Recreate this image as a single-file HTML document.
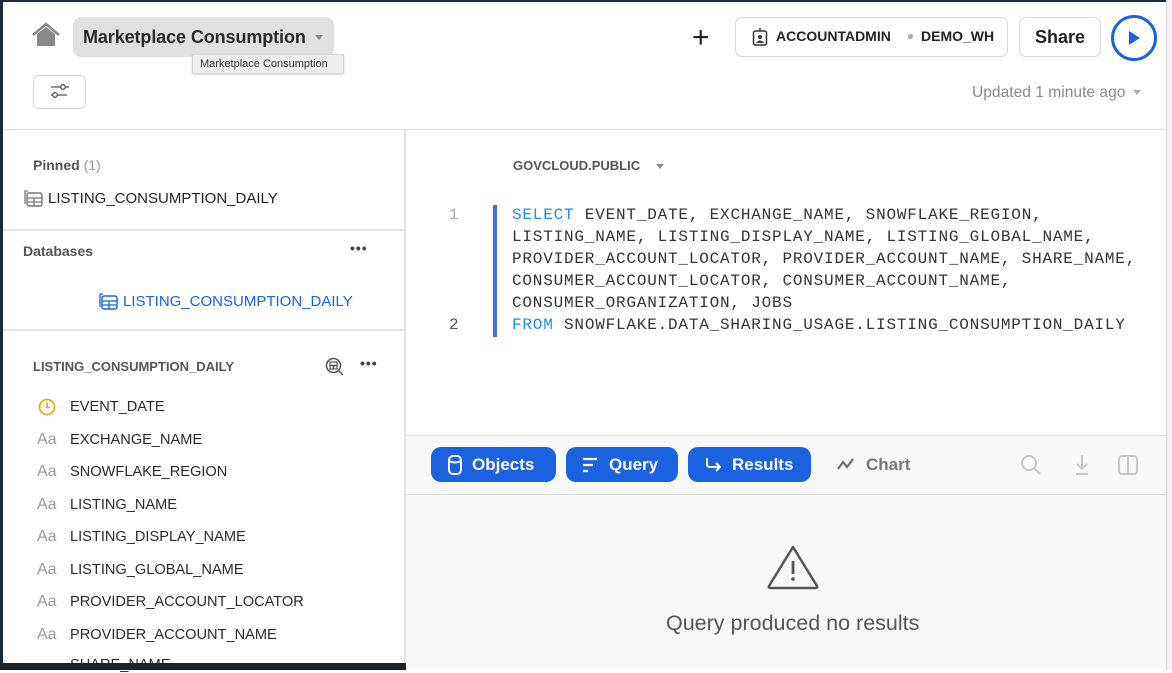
<!DOCTYPE html>
<html><head><style>
*{box-sizing:border-box;margin:0;padding:0}
body{width:1172px;height:670px;overflow:hidden;background:#fff;font-family:"Liberation Sans",sans-serif;position:relative;color:#1e1e1e}
.a{position:absolute}
.t{font-size:15px;color:#222}
.col{position:absolute;left:70px;font-size:14.6px;color:#2a2a2a}
.aa{position:absolute;left:37px;font-size:16px;color:#999}
.btn{position:absolute;top:447px;height:35px;background:#1a62e0;border-radius:10px;color:#fff;font-size:17px;font-weight:bold;display:flex;align-items:center}
.code{font-family:"Liberation Mono",monospace;font-size:16px;letter-spacing:0.8px;color:#333;line-height:22px}
.kw{color:#1a8ee8}
</style></head><body>
<div class="a" style="left:0;top:0;width:1172px;height:2px;background:#1c2a3e"></div>
<div class="a" style="left:0;top:0;width:3px;height:670px;background:#1c2a3e"></div>
<svg class="a" style="left:31px;top:22px" width="30" height="26" viewBox="0 0 30 26"><path d="M2 13 L15 2 L28 13" fill="none" stroke="#888" stroke-width="2.5"/><path d="M6 12 L15 5 L24 12 V24 H6Z" fill="#888"/></svg>
<div class="a" style="left:73px;top:17px;width:261px;height:40px;background:#dfe0e2;border-radius:8px"></div>
<div class="a" style="left:83px;top:27px;font-size:18px;font-weight:bold;color:#2a2a2a;letter-spacing:-0.1px">Marketplace Consumption</div>
<div class="a" style="left:315px;top:35px;width:0;height:0;border-left:4px solid transparent;border-right:4px solid transparent;border-top:5px solid #888"></div>
<div class="a" style="left:192px;top:54px;width:152px;height:20px;background:#eceef0;border:1px solid #d4d6d9;font-size:11px;color:#333;padding:3px 0 0 7px;box-shadow:0 1px 2px rgba(0,0,0,.15)">Marketplace Consumption</div>
<div class="a" style="left:33px;top:75px;width:53px;height:34px;border:1px solid #d6d6d6;border-radius:6px"></div>
<svg class="a" style="left:50px;top:82px" width="20" height="18" viewBox="0 0 20 18"><path d="M1 5H11M15 5H19" stroke="#555" stroke-width="1.3"/><circle cx="13" cy="5" r="2.3" fill="none" stroke="#555" stroke-width="1.3"/><path d="M1 13H3M7 13H17" stroke="#555" stroke-width="1.3"/><circle cx="5" cy="13" r="2.3" fill="none" stroke="#555" stroke-width="1.3"/></svg>
<div class="a" style="left:692px;top:24px;font-size:30px;color:#222;line-height:28px">+</div>
<div class="a" style="left:735px;top:17px;width:273px;height:40px;border:1px solid #d8d8d8;border-radius:7px"></div>
<svg class="a" style="left:752px;top:27px" width="16" height="20" viewBox="0 0 16 20"><rect x="1.5" y="4" width="13" height="14" rx="2" fill="none" stroke="#333" stroke-width="1.5"/><path d="M8 1V4" stroke="#333" stroke-width="1.5"/><circle cx="8" cy="10" r="2" fill="#333"/><path d="M4 16Q8 11 12 16" fill="#333"/></svg>
<div class="a" style="left:776px;top:28px;font-size:14px;font-weight:bold;color:#222">ACCOUNTADMIN</div>
<div class="a" style="left:908px;top:34px;width:5px;height:5px;border-radius:50%;background:#aaa"></div>
<div class="a" style="left:921px;top:28px;font-size:14px;font-weight:bold;color:#222">DEMO_WH</div>
<div class="a" style="left:1019px;top:17px;width:82px;height:40px;border:1px solid #d8d8d8;border-radius:7px;font-size:18px;font-weight:bold;color:#222;text-align:center;line-height:38px">Share</div>
<div class="a" style="left:1111px;top:15px;width:46px;height:46px;border:3px solid #1a62e0;border-radius:50%"></div>
<div class="a" style="left:1129px;top:31px;width:0;height:0;border-top:7px solid transparent;border-bottom:7px solid transparent;border-left:11px solid #1a62e0"></div>
<div class="a" style="left:972px;top:84px;font-size:15.6px;color:#8a8a8a">Updated 1 minute ago</div>
<div class="a" style="left:1133px;top:90px;width:0;height:0;border-left:4px solid transparent;border-right:4px solid transparent;border-top:5px solid #aaa"></div>
<div class="a" style="left:3px;top:129px;width:1169px;height:1px;background:#ddd"></div>
<div class="a" style="left:404px;top:130px;width:2px;height:540px;background:#e2e2e2"></div>
<div class="a" style="left:33px;top:157px;font-size:14px;font-weight:bold;color:#555">Pinned <span style="font-weight:normal;color:#999">(1)</span></div>
<svg class="a" style="left:23px;top:188px" width="21" height="20" viewBox="0 0 21 20"><path d="M2 16V3H5" fill="none" stroke="#777" stroke-width="1.3"/><rect x="4" y="5" width="15" height="13" rx="2" fill="none" stroke="#777" stroke-width="1.4"/><path d="M4 10H19M11 10V18M4 14H19" stroke="#777" stroke-width="1.3"/></svg>
<div class="a t" style="left:48px;top:190px">LISTING_CONSUMPTION_DAILY</div>
<div class="a" style="left:3px;top:229px;width:401px;height:2px;background:#e2e2e2"></div>
<div class="a" style="left:23px;top:243px;font-size:14px;font-weight:bold;color:#555">Databases</div>
<div class="a" style="left:350px;top:240px;font-size:14px;font-weight:bold;color:#444;letter-spacing:1px">•••</div>
<svg class="a" style="left:98px;top:291px" width="21" height="20" viewBox="0 0 21 20"><path d="M2 16V3H5" fill="none" stroke="#1a62e0" stroke-width="1.3"/><rect x="4" y="5" width="15" height="13" rx="2" fill="none" stroke="#1a62e0" stroke-width="1.4"/><path d="M4 10H19M11 10V18M4 14H19" stroke="#1a62e0" stroke-width="1.3"/></svg>
<div class="a t" style="left:123px;top:293px;color:#1a62e0">LISTING_CONSUMPTION_DAILY</div>
<div class="a" style="left:3px;top:329px;width:401px;height:2px;background:#e2e2e2"></div>
<div class="a" style="left:33px;top:359px;font-size:13px;font-weight:bold;color:#555">LISTING_CONSUMPTION_DAILY</div>
<svg class="a" style="left:325px;top:357px" width="20" height="20" viewBox="0 0 20 20"><circle cx="8.5" cy="8.5" r="7" fill="none" stroke="#555" stroke-width="1.5"/><rect x="5" y="5" width="7" height="7" fill="none" stroke="#555" stroke-width="1.2"/><path d="M5 8.5H12M8.5 8.5V12M13.5 13.5L18 18" stroke="#555" stroke-width="1.5"/></svg>
<div class="a" style="left:360px;top:355px;font-size:14px;font-weight:bold;color:#444;letter-spacing:1px">•••</div>
<svg class="a" style="left:38px;top:398px" width="18" height="18" viewBox="0 0 18 18"><circle cx="9" cy="9" r="7.5" fill="none" stroke="#e0a800" stroke-width="1.6"/><path d="M9 4.5V9.5H12" fill="none" stroke="#e0a800" stroke-width="1.6"/></svg>
<div class="col" style="top:399px">EVENT_DATE</div>
<div class="aa" style="top:431px">Aa</div><div class="col" style="top:432px">EXCHANGE_NAME</div>
<div class="aa" style="top:463px">Aa</div><div class="col" style="top:464px">SNOWFLAKE_REGION</div>
<div class="aa" style="top:496px">Aa</div><div class="col" style="top:497px">LISTING_NAME</div>
<div class="aa" style="top:528px">Aa</div><div class="col" style="top:529px">LISTING_DISPLAY_NAME</div>
<div class="aa" style="top:561px">Aa</div><div class="col" style="top:562px">LISTING_GLOBAL_NAME</div>
<div class="aa" style="top:593px">Aa</div><div class="col" style="top:594px">PROVIDER_ACCOUNT_LOCATOR</div>
<div class="aa" style="top:626px">Aa</div><div class="col" style="top:627px">PROVIDER_ACCOUNT_NAME</div>
<div class="col" style="top:657px">SHARE_NAME</div>
<div class="a" style="left:0;top:663px;width:417px;height:7px;background:#1c2230;border-radius:0 3px 0 0"></div>
<div class="a" style="left:513px;top:158px;font-size:13px;font-weight:bold;color:#555">GOVCLOUD.PUBLIC</div>
<div class="a" style="left:656px;top:164px;width:0;height:0;border-left:4px solid transparent;border-right:4px solid transparent;border-top:5px solid #888"></div>
<div class="a code" style="left:449px;top:204px;color:#aaa">1</div>
<div class="a code" style="left:449px;top:314px;color:#555">2</div>
<div class="a" style="left:493px;top:205px;width:4px;height:132px;background:#3b6ff5"></div>
<div class="a code" style="left:512px;top:204px;white-space:pre"><span class="kw">SELECT</span> EVENT_DATE, EXCHANGE_NAME, SNOWFLAKE_REGION,
LISTING_NAME, LISTING_DISPLAY_NAME, LISTING_GLOBAL_NAME,
PROVIDER_ACCOUNT_LOCATOR, PROVIDER_ACCOUNT_NAME, SHARE_NAME,
CONSUMER_ACCOUNT_LOCATOR, CONSUMER_ACCOUNT_NAME,
CONSUMER_ORGANIZATION, JOBS
<span class="kw">FROM</span> SNOWFLAKE.DATA_SHARING_USAGE.LISTING_CONSUMPTION_DAILY</div>
<div class="a" style="left:406px;top:435px;width:760px;height:235px;background:#f8f8f8"></div>
<div class="a" style="left:406px;top:435px;width:760px;height:1px;background:#ddd"></div>
<div class="a" style="left:406px;top:494px;width:760px;height:1px;background:#ddd"></div>
<div class="a" style="left:1166px;top:0;width:6px;height:670px;background:#f3f3f3;border-left:1px solid #d5d5d5"></div>
<div class="btn" style="left:431px;width:125px"><svg style="margin:0 10px 0 17px" width="14" height="20" viewBox="0 0 14 20"><rect x="1" y="1" width="12" height="18" rx="4" fill="none" stroke="#fff" stroke-width="2"/><path d="M1 6Q7 9 13 6" fill="none" stroke="#fff" stroke-width="2"/></svg>Objects</div>
<div class="btn" style="left:566px;width:112px"><svg style="margin:0 11px 0 16px" width="16" height="16" viewBox="0 0 16 16"><path d="M1 2H15M1 8H11M1 14H6" stroke="#fff" stroke-width="2.2"/></svg>Query</div>
<div class="btn" style="left:688px;width:123px"><svg style="margin:0 10px 0 16px" width="18" height="16" viewBox="0 0 18 16"><path d="M3 1V7Q3 10 6 10H16M12 6L16 10L12 14" fill="none" stroke="#fff" stroke-width="2"/></svg>Results</div>
<svg class="a" style="left:837px;top:457px" width="18" height="14" viewBox="0 0 18 14"><path d="M1 12L6 5L10 10L16 2" fill="none" stroke="#666" stroke-width="2"/></svg>
<div class="a" style="left:866px;top:455px;font-size:17px;font-weight:bold;color:#777">Chart</div>
<svg class="a" style="left:1020px;top:454px" width="22" height="22" viewBox="0 0 22 22"><circle cx="9" cy="9" r="7" fill="none" stroke="#c8c8c8" stroke-width="2"/><path d="M14 14L20 20" stroke="#c8c8c8" stroke-width="2.2"/></svg>
<svg class="a" style="left:1074px;top:454px" width="16" height="22" viewBox="0 0 16 22"><path d="M8 1V15M3 10L8 15L13 10M2 20H14" fill="none" stroke="#c8c8c8" stroke-width="2"/></svg>
<svg class="a" style="left:1117px;top:454px" width="22" height="22" viewBox="0 0 22 22"><rect x="2" y="2" width="18" height="18" rx="3" fill="none" stroke="#c8c8c8" stroke-width="2"/><path d="M11 2V20" stroke="#c8c8c8" stroke-width="2"/></svg>
<svg class="a" style="left:766px;top:544px" width="54" height="46" viewBox="0 0 54 46"><path d="M27 3L51 42Q52 44 49 44H5Q2 44 3 42Z" fill="none" stroke="#555" stroke-width="2.5" stroke-linejoin="round"/><path d="M27 17V30" stroke="#555" stroke-width="2.8"/><circle cx="27" cy="35" r="1.8" fill="#555"/></svg>
<div class="a" style="left:666px;top:611px;font-size:21.5px;color:#555">Query produced no results</div>
</body></html>
